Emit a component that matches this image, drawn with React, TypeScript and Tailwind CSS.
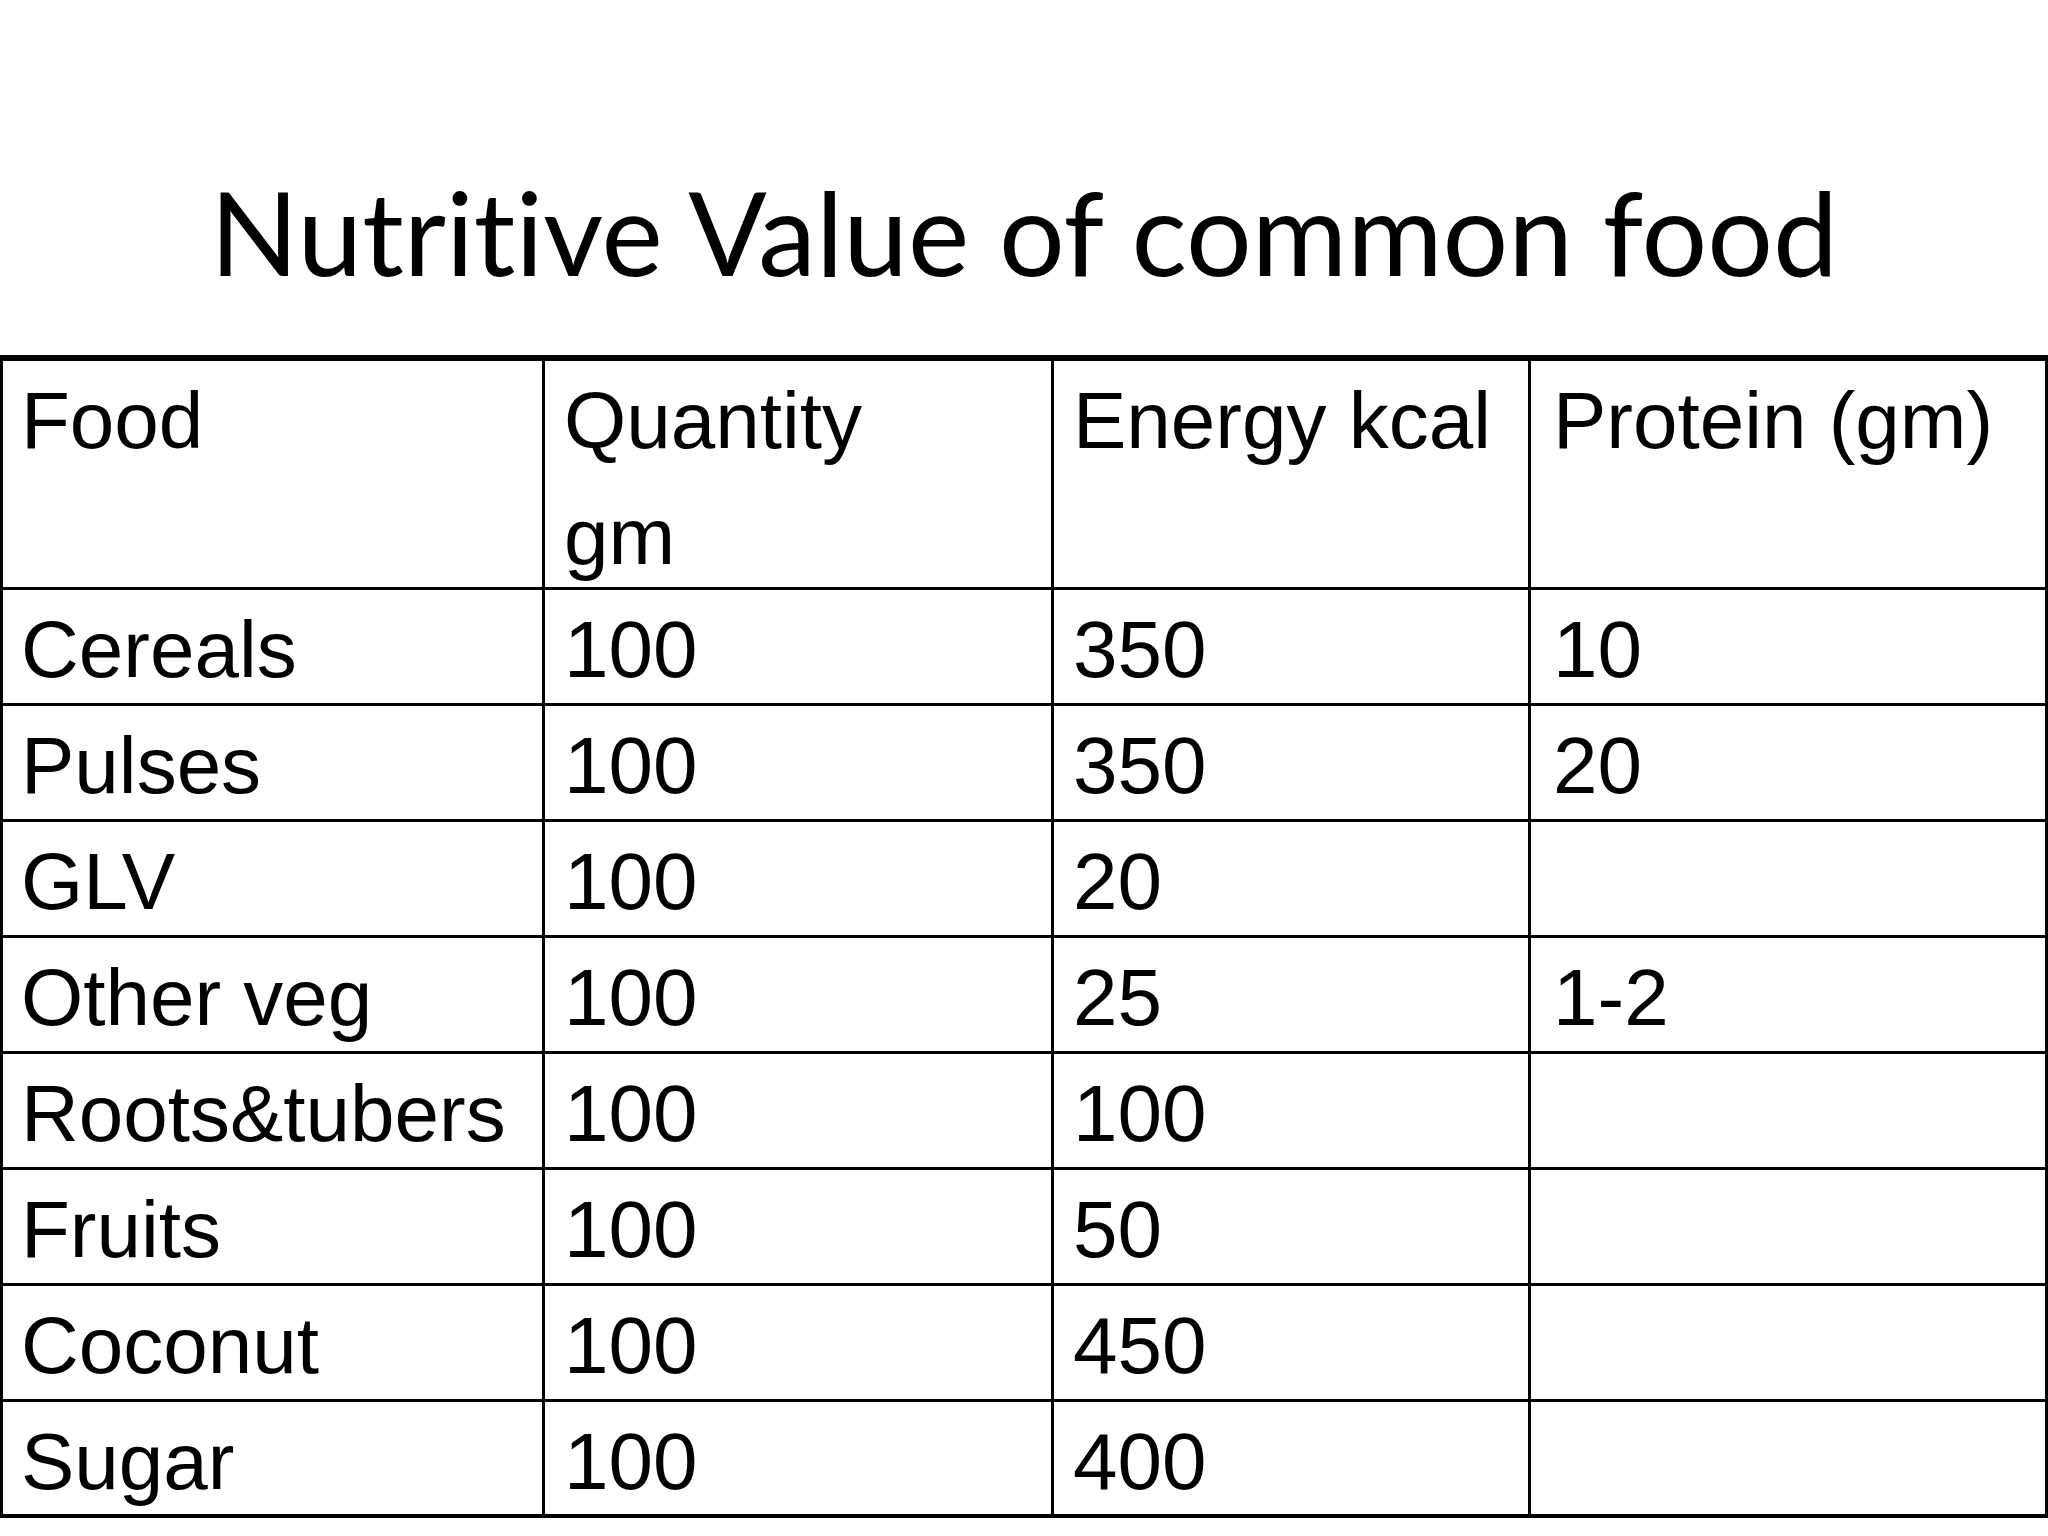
import React from "react";

const rows: [string, string, string, string][] = [
  ["Cereals", "100", "350", "10"],
  ["Pulses", "100", "350", "20"],
  ["GLV", "100", "20", ""],
  ["Other veg", "100", "25", "1-2"],
  ["Roots&tubers", "100", "100", ""],
  ["Fruits", "100", "50", ""],
  ["Coconut", "100", "450", ""],
  ["Sugar", "100", "400", ""],
];

const pads = ["pl-[18px]", "pl-[19px]", "pl-[19px]", "pl-[22px]"];

const cell =
  "border-r-[3px] border-b-[3px] border-black pt-[2px] text-[80px] leading-[116px] whitespace-nowrap overflow-visible";

export default function App() {
  return (
    <div className="w-[2048px] h-[1536px] bg-white text-black overflow-hidden">
      <div className="h-[355px] flex justify-center pt-[174px]">
        <h1
          className="text-[116px] leading-[116px] font-normal [font-variant-ligatures:none] [font-feature-settings:'liga'_0]"
          style={{ fontFamily: "Lato, 'Open Sans', sans-serif" }}
        >
          Nutritive Value of common food
        </h1>
      </div>
      <div
        className="grid grid-cols-[542px_509px_477px_1fr] border-t-[6px] border-l-[3px] border-black"
        style={{ fontFamily: "'Liberation Sans', Arial, sans-serif" }}
      >
        <div className={`${cell} ${pads[0]} h-[229px]`}>Food</div>
        <div className={`${cell} ${pads[1]} h-[229px]`}>
          Quantity
          <br />
          gm
        </div>
        <div className={`${cell} ${pads[2]} h-[229px]`}>Energy kcal</div>
        <div className={`${cell} ${pads[3]} h-[229px]`}>Protein (gm)</div>
        {rows.map((r, i) => (
          <React.Fragment key={i}>
            {r.map((c, j) => (
              <div
                key={j}
                className={`${cell} ${pads[j]} h-[116px] ${i === rows.length - 1 ? "border-b-[4px]" : ""}`}
              >
                {c}
              </div>
            ))}
          </React.Fragment>
        ))}
      </div>
    </div>
  );
}
